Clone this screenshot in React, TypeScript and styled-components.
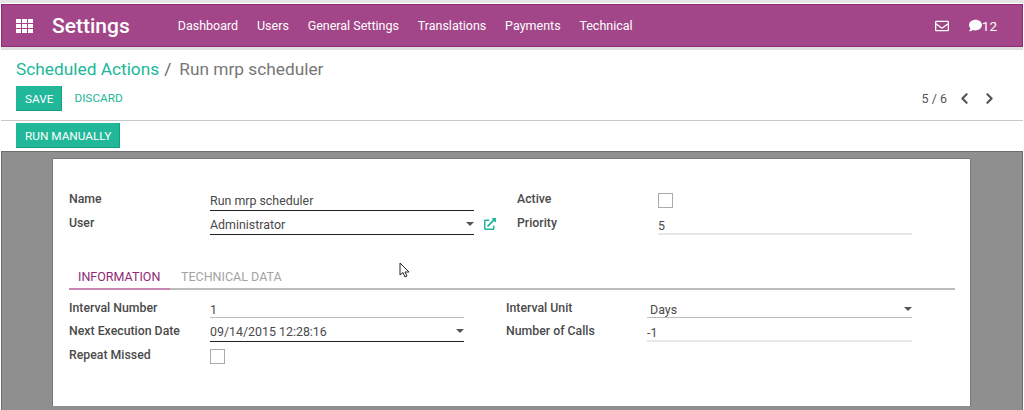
import React from "react";
import styled, { createGlobalStyle } from "styled-components";
import { FaRegEnvelope, FaComment, FaExternalLinkAlt } from "react-icons/fa";
import { ChevronLeft, ChevronRight } from "lucide-react";

const Global = createGlobalStyle`
  html, body { margin: 0; padding: 0; background: #fff; overflow: hidden; }
  * { box-sizing: border-box; }
  body { font-family: Roboto, "Liberation Sans", sans-serif; color: #4c4c4c; }
`;
const Page = styled.div`
  width: 1024px; height: 410px; display: flex; flex-direction: column; overflow: hidden;
  padding: 1px 1px 0 1px; background: #fff; border-top: 3px solid #e6e6e6;
`;
const Navbar = styled.header`
  height: 43px; flex: none; background: #a24689; display: flex; align-items: center;
  border: 1px solid #8f2a78; padding: 0 0 0 14px; color: #fff;
  box-shadow: 0 3px 0 #e0e0e0;
`;
const Brand = styled.span`
  font-size: 21px; font-weight: 500; margin: 0 48px 0 19px;
`;
const NavLink = styled.a`
  font-size: 12.5px; margin-right: 18.8px; color: #fff;
`;
const NavRight = styled.div`
  margin-left: auto; margin-right: 25px; display: flex; align-items: center; gap: 20px; font-size: 13.5px;
`;
const Msg = styled.span`
  display: flex; align-items: center;
`;
const Crumbs = styled.div`
  flex: none; height: 29px; margin-top: 7px; padding-left: 15px; display: flex; align-items: center; font-size: 17.3px; color: #777;
`;
const CrumbLink = styled.span`
  color: #21b799;
`;
const Sep = styled.span`
  margin: 0 8px 0 5px; color: #666;
`;
const Actions = styled.div`
  flex: none; height: 37px; padding: 3px 25px 0 15px; display: flex; align-items: flex-start;
`;
const Btn = styled.button`
  height: 25px; padding: 0 9px; border: 0; background: #21b799; color: #fff; font: 400 11.8px Roboto, sans-serif;
  box-shadow: inset 0 -1px 0 #1a9c83, inset -1px 0 0 #1a9c83;
`;
const Ghost = styled.span`
  font-size: 11.8px; color: #21b799; margin-left: 12px; line-height: 25px;
`;
const Pager = styled.div`
  margin-left: auto; display: flex; align-items: center; height: 25px; font-size: 12.5px; color: #555; gap: 8px;
`;
const PagerCount = styled.span`
  margin-right: 1px;
`;
const Status = styled.div`
  flex: none; height: 31px; padding: 2px 15px 0; border-top: 1px solid #c8c8c8;
`;
const Gray = styled.main`
  flex: 1; min-height: 0; background: #8f8f8f; border: 1px solid #6e6e6e; border-bottom: 0; padding: 7px 51px 0;
  display: flex; flex-direction: column;
`;
const Sheet = styled.section`
  width: 917px; height: 247px; flex: none; background: #fff; padding: 28px 15px 0 16px;
  box-shadow: -1px 0 0 #777, 1px 0 0 #777, 0 -1px 0 #777;
`;
const Grid = styled.div<{ $cols: string }>`
  display: grid; grid-template-columns: ${p => p.$cols}; grid-auto-rows: 24px;
`;
const LowerGrid = styled(Grid)`
  margin-top: 4px;
`;
const Label = styled.label<{ $top: number }>`
  font-size: 12.3px; font-weight: 500; color: #4a4a4a; line-height: 24px; height: 22px; margin-top: ${p => p.$top}px;
`;
const Field = styled.div<{ $line: "dark" | "mid" | "light"; $indent?: number }>`
  height: 24px; font-size: 12.4px; color: #4a4a4a; display: flex; align-items: center;
  padding-top: ${p => (p.$line === "dark" ? 3 : 7)}px;
  padding-left: ${p => p.$indent ?? 0}px;
  border-bottom: ${p => p.$line === "dark" ? "1.5px solid #222" : p.$line === "mid" ? "1px solid #bdbdbd" : "2px solid #e8e8e8"};
`;
const Caret = styled.span`
  margin-left: auto; width: 0; height: 0; border: 4px solid transparent; border-top-color: #555; border-bottom: 0;
`;
const LinkCell = styled.div`
  color: #21b799; padding: 7px 0 0 10px; font-size: 12px;
`;
const Check = styled.span<{ $top: number }>`
  display: block; width: 15px; height: 15px; border: 1px solid #aaa; margin-top: ${p => p.$top}px; background: #fff;
`;
const CheckCell = styled.div``;
const Empty = styled.div``;
const Tabs = styled.nav`
  margin-top: 30px; height: 25px; display: flex; border-bottom: 2px solid #bcbcbc; font-size: 12.5px;
`;
const Tab = styled.span<{ $active?: boolean }>`
  padding: 0 10px 0 ${p => (p.$active ? 9 : 11)}px; width: ${p => (p.$active ? "101px" : "auto")}; line-height: 23px; height: 25px; text-align: center;
  color: ${p => (p.$active ? "#8f2a78" : "#a3a3a3")};
  border-bottom: 2px solid ${p => (p.$active ? "#c987b6" : "transparent")};
`;
const Cursor = styled.svg`
  position: absolute; left: 399px; top: 262px;
`;
const Stage = styled.div`
  position: relative;
`;
const Apps = () => (
  <svg width="17" height="14" viewBox="0 0 17 14" fill="#fff">
    {[0, 5, 10].map(y => [0, 6, 12].map(x => <rect key={x + "-" + y} x={x} y={y} width="5" height="4" />))}
  </svg>
);

export default function App() {
  return (
    <Stage>
      <Global />
      <Page>
        <Navbar>
          <Apps />
          <Brand>Settings</Brand>
          {["Dashboard", "Users", "General Settings", "Translations", "Payments", "Technical"].map(n => (
            <NavLink key={n}>{n}</NavLink>
          ))}
          <NavRight>
            <FaRegEnvelope size={14} />
            <Msg><FaComment size={13} />12</Msg>
          </NavRight>
        </Navbar>
        <Crumbs>
          <CrumbLink>Scheduled Actions</CrumbLink>
          <Sep>/</Sep>
          Run mrp scheduler
        </Crumbs>
        <Actions>
          <Btn>SAVE</Btn>
          <Ghost>DISCARD</Ghost>
          <Pager>
            <PagerCount>5 / 6</PagerCount>
            <ChevronLeft size={17} strokeWidth={3} />
            <ChevronRight size={17} strokeWidth={3} />
          </Pager>
        </Actions>
        <Status><Btn>RUN MANUALLY</Btn></Status>
        <Gray>
          <Sheet>
            <Grid $cols="141px 264px 43px 141px 254px">
              <Label $top={0}>Name</Label>
              <Field $line="dark">Run mrp scheduler</Field>
              <Empty />
              <Label $top={0}>Active</Label>
              <CheckCell><Check $top={6} /></CheckCell>
              <Label $top={0}>User</Label>
              <Field $line="dark">Administrator<Caret /></Field>
              <LinkCell><FaExternalLinkAlt /></LinkCell>
              <Label $top={0}>Priority</Label>
              <Field $line="light">5</Field>
            </Grid>
            <Tabs>
              <Tab $active>INFORMATION</Tab>
              <Tab>TECHNICAL DATA</Tab>
            </Tabs>
            <LowerGrid $cols="141px 254px 42px 141px 265px">
              <Label $top={2}>Interval Number</Label>
              <Field $line="mid">1</Field>
              <Empty />
              <Label $top={2}>Interval Unit</Label>
              <Field $line="mid" $indent={3}>Days<Caret /></Field>
              <Label $top={1}>Next Execution Date</Label>
              <Field $line="dark">09/14/2015 12:28:16<Caret /></Field>
              <Empty />
              <Label $top={1}>Number of Calls</Label>
              <Field $line="light">-1</Field>
              <Label $top={1}>Repeat Missed</Label>
              <CheckCell><Check $top={7} /></CheckCell>
            </LowerGrid>
          </Sheet>
        </Gray>
      </Page>
      <Cursor width="11" height="16" viewBox="0 0 11 16">
        <path d="M1 1 L1 13 L4 10.5 L6 15 L8 14 L6 10 L10 10 Z" fill="#fff" stroke="#222" strokeWidth="1" />
      </Cursor>
    </Stage>
  );
}
